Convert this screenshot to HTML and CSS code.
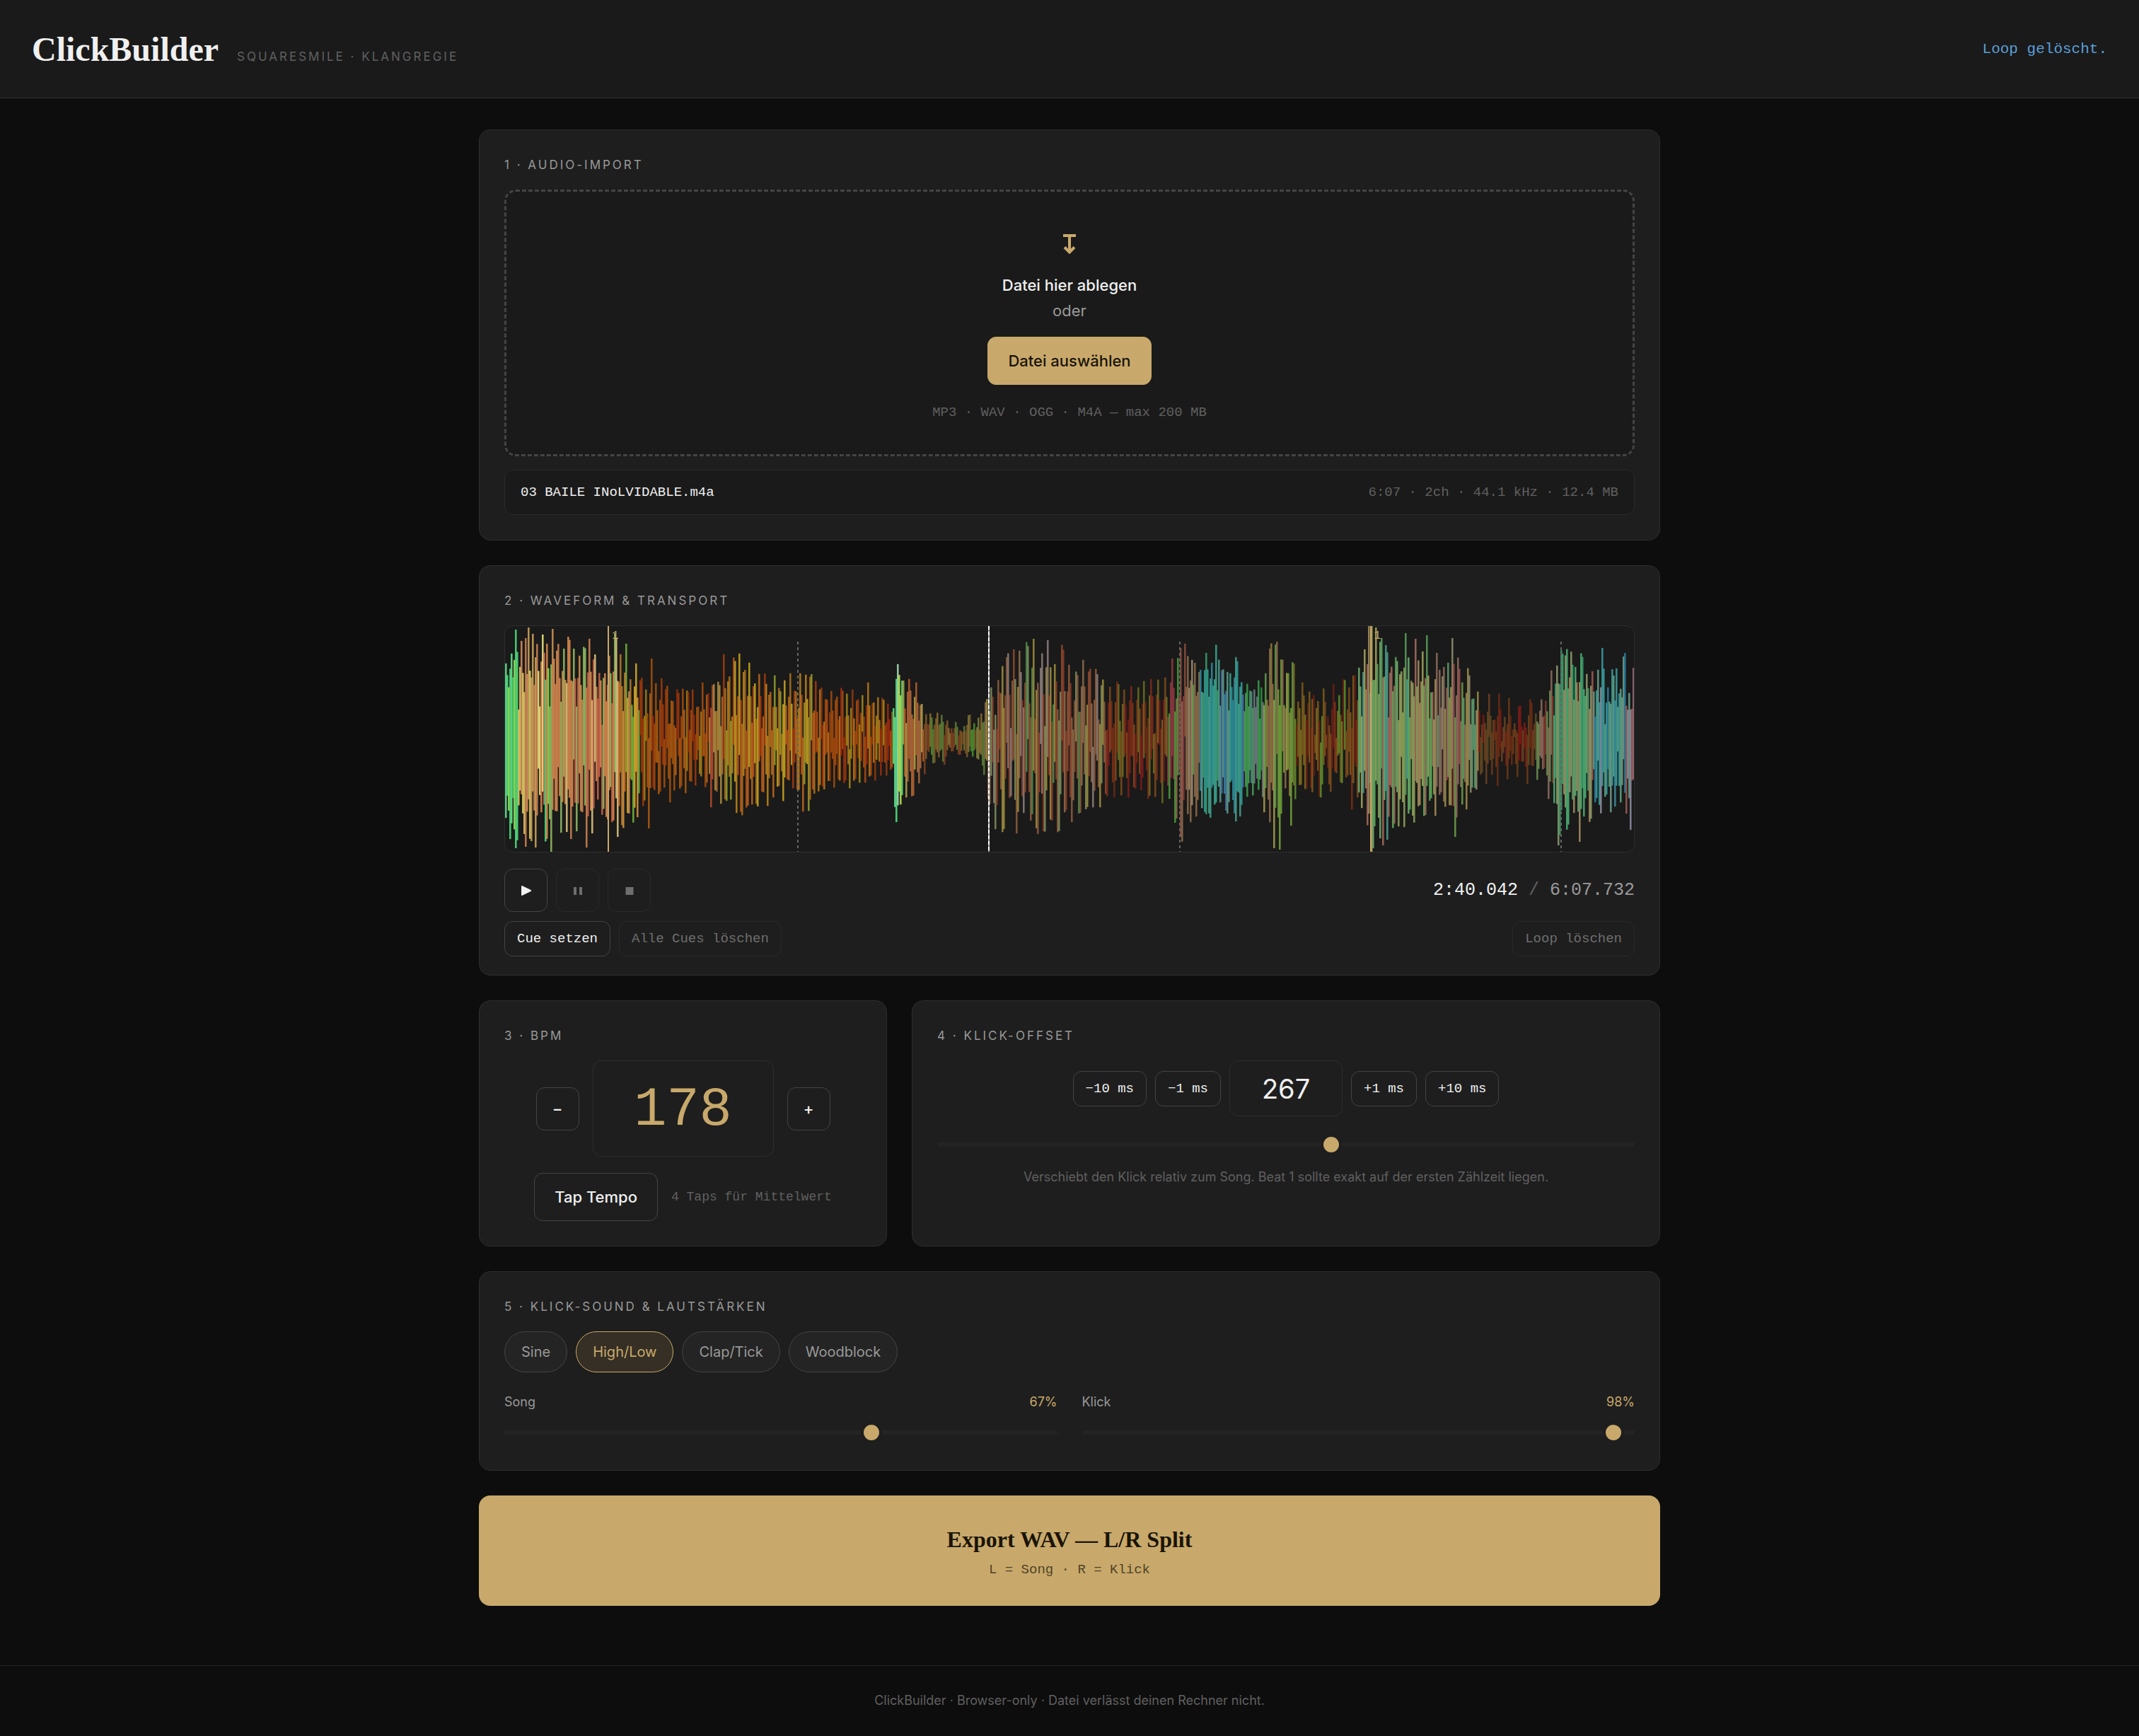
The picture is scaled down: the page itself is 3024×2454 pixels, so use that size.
FILE: index.html
```html
<!DOCTYPE html>
<html lang="de">
  <head>
    <meta charset="UTF-8" />
    <meta name="viewport" content="width=device-width, initial-scale=1.0" />
    <title>ClickBuilder</title>
    <link rel="stylesheet" href="styles.css">
  </head>
  <body>
    <header class="header">
      <div class="brand">
        <h1>ClickBuilder</h1>
        <span class="brand-sub">Squaresmile · Klangregie</span>
      </div>
      <div class="status" role="status">Loop gelöscht.</div>
    </header>

    <main class="main">
      <section class="card">
        <h2>1 · Audio-Import</h2>
        <div class="dropzone">
          <svg class="drop-icon" viewBox="0 0 18 28" aria-hidden="true">
            <path d="M0 2h18M9 2v23M2 18.5l7 7 7-7" />
          </svg>
          <p class="drop-title">Datei hier ablegen</p>
          <p class="drop-or">oder</p>
          <button class="btn btn-primary" type="button">Datei auswählen</button>
          <p class="drop-meta">MP3 · WAV · OGG · M4A — max 200 MB</p>
        </div>
        <div class="file-row">
          <span class="file-name">03 BAILE INoLVIDABLE.m4a</span>
          <span class="file-info">6:07 · 2ch · 44.1 kHz · 12.4 MB</span>
        </div>
      </section>

      <section class="card card-wave">
        <h2>2 · Waveform &amp; Transport</h2>
        <div class="wave">
          <canvas id="wave"></canvas>
          <div class="cue" style="left: 9.1%"><span>1</span></div>
          <div class="bar-line" style="left: 25.9%"></div>
          <div class="bar-line" style="left: 59.7%"></div>
          <div class="cue" style="left: 76.6%"><span>1</span></div>
          <div class="bar-line" style="left: 93.5%"></div>
          <div class="playhead" style="left: 42.8%"></div>
        </div>
        <div class="transport">
          <div class="buttons">
            <button class="btn btn-icon" type="button" aria-label="Play">
              <svg viewBox="0 0 16 16"><path d="M1 2.200Q1 .5 2.600 1.200L14.500 7Q16 8 14.500 9L2.600 14.800Q1 15.500 1 13.800Z" /></svg>
            </button>
            <button class="btn btn-icon" type="button" aria-label="Pause" disabled>
              <svg viewBox="0 0 16 16"><path d="M2 3h4v11H2zM10 3h4v11h-4z" /></svg>
            </button>
            <button class="btn btn-icon" type="button" aria-label="Stop" disabled>
              <svg viewBox="0 0 16 16"><path d="M2.500 3h11v11h-11z" /></svg>
            </button>
          </div>
          <div class="time">2:40.042 <span class="time-sep">/</span> <span class="time-total">6:07.732</span></div>
        </div>
        <div class="transport cues">
          <div class="buttons">
            <button class="btn btn-small" type="button">Cue setzen</button>
            <button class="btn btn-small" type="button" disabled>Alle Cues löschen</button>
          </div>
          <button class="btn btn-small" type="button" disabled>Loop löschen</button>
        </div>
      </section>

      <div class="columns">
        <section class="card">
          <h2>3 · BPM</h2>
          <div class="bpm-row">
            <button class="btn btn-icon" type="button" aria-label="BPM verringern">−</button>
            <input class="bpm-input" type="number" value="178" aria-label="BPM">
            <button class="btn btn-icon" type="button" aria-label="BPM erhöhen">+</button>
          </div>
          <div class="tap-row">
            <button class="btn" type="button">Tap Tempo</button>
            <span class="tap-hint">4 Taps für Mittelwert</span>
          </div>
        </section>

        <section class="card">
          <h2>4 · Klick-Offset</h2>
          <div class="offset-row">
            <button class="btn btn-small" type="button">−10 ms</button>
            <button class="btn btn-small" type="button">−1 ms</button>
            <input class="offset-input" type="number" value="267" aria-label="Offset in ms">
            <button class="btn btn-small" type="button">+1 ms</button>
            <button class="btn btn-small" type="button">+10 ms</button>
          </div>
          <input class="slider offset-slider" type="range" min="-2000" max="2000" value="267" aria-label="Klick-Offset">
          <p class="hint">Verschiebt den Klick relativ zum Song. Beat 1 sollte exakt auf der ersten Zählzeit liegen.</p>
        </section>
      </div>

      <section class="card">
        <h2>5 · Klick-Sound &amp; Lautstärken</h2>
        <div class="pills">
          <button class="pill" type="button" aria-pressed="false">Sine</button>
          <button class="pill active" type="button" aria-pressed="true">High/Low</button>
          <button class="pill" type="button" aria-pressed="false">Clap/Tick</button>
          <button class="pill" type="button" aria-pressed="false">Woodblock</button>
        </div>
        <div class="volumes">
          <div class="volume">
            <div class="volume-head">
              <label for="vol-song">Song</label>
              <output for="vol-song">67%</output>
            </div>
            <input class="slider" id="vol-song" type="range" min="0" max="100" value="67">
          </div>
          <div class="volume">
            <div class="volume-head">
              <label for="vol-click">Klick</label>
              <output for="vol-click">98%</output>
            </div>
            <input class="slider" id="vol-click" type="range" min="0" max="100" value="98">
          </div>
        </div>
      </section>

      <button class="export" type="button">
        <span class="export-title">Export WAV — L/R Split</span>
        <span class="export-sub">L = Song · R = Klick</span>
      </button>
    </main>

    <footer class="footer">ClickBuilder · Browser-only · Datei verlässt deinen Rechner nicht.</footer>

    <script src="waveform.js"></script>
  </body>
</html>
```
FILE: styles.css
```css
:root {
  --bg: #0d0d0d;
  --surface: #1a1a1a;
  --card: #1e1e1e;
  --raised: #242424;
  --line: #2e2e2e;
  --line-strong: #444;
  --text: #f0f0f0;
  --muted: #999;
  --dim: #606060;
  --gold: #c8a96b;
  --sans: Inter, "Open Sans", sans-serif;
  --mono: "Liberation Mono", monospace;
  --serif: "Liberation Serif", serif;
}
* {
  box-sizing: border-box;
}
body {
  margin: 0;
  background: var(--bg);
  color: var(--text);
  font: 22px/36px var(--sans);
}
h1,
h2,
p {
  margin: 0;
}
button,
input {
  font-family: inherit;
  margin: 0;
}

/* Header */
.header {
  display: flex;
  align-items: center;
  justify-content: space-between;
  padding: 40px 45px 38px;
  background: var(--surface);
  border-bottom: 1px solid var(--line);
}
.brand {
  display: flex;
  align-items: baseline;
  gap: 26px;
}
h1 {
  font: bold 48px/60px var(--serif);
}
.brand-sub {
  font-size: 17px;
  line-height: 28px;
  letter-spacing: 3px;
  text-transform: uppercase;
  color: var(--dim);
}
.status {
  font: 21px/28px var(--mono);
  color: #5b9fd8;
}

/* Layout */
.main {
  display: flex;
  flex-direction: column;
  gap: 35px;
  max-width: 1670px;
  margin: 0 auto;
  padding: 44px 0 84px;
}
.columns {
  display: grid;
  grid-template-columns: 6fr 11fr;
  gap: 35px;
}
.card {
  padding: 35px;
  background: var(--card);
  border: 1px solid var(--line);
  border-radius: 16px;
}
h2 {
  margin-bottom: 21px;
  font-size: 17px;
  font-weight: 400;
  line-height: 28px;
  letter-spacing: 3px;
  text-transform: uppercase;
  color: var(--muted);
}

/* Buttons */
.btn {
  height: 68px;
  padding: 0 28px;
  border: 1px solid var(--line-strong);
  border-radius: 12px;
  background: transparent;
  color: var(--text);
  font-size: 22px;
  font-weight: 500;
}
.btn-primary {
  border-color: var(--gold);
  background: var(--gold);
  color: #1a1408;
}
.btn-icon {
  display: flex;
  align-items: center;
  justify-content: center;
  width: 61px;
  height: 61px;
  padding: 0;
}
.btn-icon svg {
  width: 16px;
  height: 16px;
  fill: currentColor;
}
.btn-small {
  height: 50px;
  padding: 0 17px;
  font-family: var(--mono);
  font-size: 19px;
  font-weight: normal;
}
.btn:disabled {
  border-color: #2a2a2a;
  color: #6e6e6e;
}
.buttons {
  display: flex;
  gap: 12px;
}

/* Import */
.dropzone {
  display: flex;
  flex-direction: column;
  align-items: center;
  padding: 60px 35px 47px;
  border: 3px dashed var(--line-strong);
  border-radius: 16px;
  background: var(--surface);
}
.drop-icon {
  width: 18px;
  height: 28px;
  margin-bottom: 26px;
  fill: none;
  stroke: var(--gold);
  stroke-width: 4;
}
.drop-title {
  font-weight: 500;
}
.drop-or {
  margin-bottom: 19px;
  color: var(--muted);
}
.drop-meta {
  margin-top: 27px;
  font: 19px/24px var(--mono);
  color: var(--dim);
}
.file-row {
  display: flex;
  justify-content: space-between;
  margin-top: 19px;
  padding: 17px 22px;
  border: 1px solid #2a2a2a;
  border-radius: 12px;
  background: var(--surface);
  font: 19px/28px var(--mono);
}
.file-info {
  color: var(--dim);
}

/* Waveform */
.card-wave {
  padding-bottom: 26px;
}
.wave {
  position: relative;
  height: 321px;
  overflow: hidden;
  border: 1px solid var(--line);
  border-radius: 12px;
  background: var(--surface);
}
.wave canvas {
  display: block;
  width: 100%;
  height: 100%;
}
.cue,
.bar-line,
.playhead {
  position: absolute;
  top: 0;
  bottom: 0;
  width: 2px;
}
.cue {
  background: var(--gold);
}
.cue span {
  position: absolute;
  left: 6px;
  top: 6px;
  font: 16px/16px var(--mono);
  color: var(--gold);
}
.bar-line {
  top: 22px;
  background: repeating-linear-gradient(#666 0 4px, transparent 4px 8px);
}
.playhead {
  background: repeating-linear-gradient(#fff 0 5px, #aaa 5px 8px);
}
.transport {
  display: flex;
  align-items: center;
  justify-content: space-between;
  margin-top: 23px;
}
.cues {
  margin-top: 13px;
}
.time {
  font: 25px/36px var(--mono);
}
.time-sep {
  color: var(--dim);
}
.time-total {
  color: var(--muted);
}

/* BPM and offset */
.bpm-row,
.tap-row,
.offset-row {
  display: flex;
  align-items: center;
  justify-content: center;
  gap: 19px;
}
.tap-row {
  margin-top: 23px;
}
.tap-hint {
  font: 18px/28px var(--mono);
  color: var(--dim);
}
.bpm-input,
.offset-input {
  border: 1px solid var(--line);
  border-radius: 12px;
  background: transparent;
  text-align: center;
  appearance: textfield;
}
input::-webkit-inner-spin-button {
  appearance: none;
  margin: 0;
}
.bpm-input {
  width: 256px;
  height: 136px;
  padding: 5px 0 0;
  font: 77px var(--mono);
  color: var(--gold);
}
.offset-row {
  gap: 12px;
}
.offset-input {
  width: 160px;
  height: 79px;
  font-size: 38px;
  color: var(--text);
}
.hint {
  margin-top: 16px;
  font-size: 18px;
  line-height: 30px;
  text-align: center;
  color: var(--dim);
}

/* Sliders */
.slider {
  display: block;
  width: 100%;
  height: 30px;
  background: transparent;
  appearance: none;
}
.slider::-webkit-slider-runnable-track {
  height: 6px;
  border-radius: 3px;
  background: var(--raised);
}
.slider::-webkit-slider-thumb {
  width: 30px;
  height: 30px;
  margin-top: -12px;
  border: 4px solid var(--card);
  border-radius: 50%;
  background: var(--gold);
  appearance: none;
}
.offset-slider {
  margin-top: 25px;
}

/* Sound and volumes */
.pills {
  display: flex;
  gap: 12px;
}
.pill {
  height: 58px;
  padding: 0 23px;
  border: 1px solid var(--line-strong);
  border-radius: 29px;
  background: var(--raised);
  color: var(--muted);
  font-size: 20px;
}
.pill.active {
  border-color: var(--gold);
  background: #352f25;
  color: var(--gold);
}
.volumes {
  display: grid;
  grid-template-columns: 1fr 1fr;
  gap: 35px;
  margin-top: 28px;
  padding-bottom: 3px;
}
.volume-head {
  display: flex;
  justify-content: space-between;
  margin-bottom: 14px;
  font-size: 18px;
  line-height: 28px;
  color: var(--muted);
}
.volume-head output {
  color: var(--gold);
}

/* Export */
.export {
  display: flex;
  flex-direction: column;
  align-items: center;
  gap: 11px;
  padding: 42px 35px 39px;
  border: 0;
  border-radius: 16px;
  background: var(--gold);
  color: #1a1408;
}
.export-title {
  font: bold 32px/40px var(--serif);
}
.export-sub {
  font: 19px/24px var(--mono);
  opacity: 0.7;
}

.footer {
  padding: 35px;
  border-top: 1px solid #222;
  text-align: center;
  font-size: 18px;
  line-height: 28px;
  color: var(--dim);
}
```
FILE: waveform.js
```js
// peaks as x, height pairs; x runs from 0 to 1596, height from 0 to 160
const upper = [
  0,107, 8,121, 14,155, 22,139, 29,157, 32,158, 38,149, 43,141, 53,153, 58,135, 66,156, 73,142, 82,128, 89,159,
  96,128, 104,118, 111,145, 118,142, 125,128, 133,100, 139,102, 146,118, 155,158, 162,120, 170,135, 175,90,
  184,107, 191,101, 198,70, 206,114, 212,79, 220,86, 227,86, 235,62, 243,80, 250,71, 257,80, 264,70, 271,56,
  278,80, 285,72, 293,85, 301,89, 308,120, 315,98, 323,130, 330,121, 337,112, 344,108, 351,90, 358,92, 367,100,
  373,81, 380,90, 387,82, 394,83, 402,93, 409,80, 416,93, 424,91, 431,105, 438,82, 445,85, 453,66, 460,68,
  467,68, 475,83, 482,64, 490,70, 497,66, 504,62, 512,80, 519,60, 526,59, 533,67, 540,50, 547,46, 554,106,
  561,88, 570,85, 580,80, 587,55, 594,35, 600,36, 610,37, 616,34, 624,26, 630,15, 636,24, 643,14, 648,18,
  655,38, 662,22, 668,30, 672,36, 679,62, 687,84, 692,34, 697,113, 701,116, 709,132, 718,127, 726,125, 737,143,
  746,142, 751,98, 757,130, 766,140, 769,120, 776,106, 787,139, 796,105, 807,99, 816,112, 825,105, 835,105,
  843,87, 854,74, 865,84, 874,70, 884,75, 894,73, 902,82, 912,85, 922,84, 932,87, 942,114, 951,125, 954,129,
  960,135, 963,128, 970,112, 973,115, 981,103, 990,122, 998,108, 1005,146, 1007,128, 1013,108, 1020,95,
  1024,93, 1033,122, 1039,84, 1048,78, 1053,81, 1058,70, 1064,83, 1068,73, 1074,93, 1081,147, 1089,149,
  1097,122, 1105,104, 1113,121, 1121,60, 1126,80, 1136,67, 1141,81, 1147,57, 1157,76, 1162,32, 1170,78,
  1178,62, 1185,97, 1192,73, 1199,106, 1206,101, 1214,127, 1220,160, 1224,160, 1230,158, 1237,156, 1245,147,
  1251,112, 1259,128, 1265,105, 1272,150, 1275,132, 1281,98, 1286,142, 1289,126, 1296,124, 1302,147, 1309,75,
  1316,122, 1320,98, 1325,116, 1332,108, 1338,143, 1347,122, 1352,80, 1361,106, 1367,66, 1374,67, 1382,34,
  1390,64, 1397,32, 1404,64, 1412,31, 1418,58, 1426,22, 1433,54, 1440,23, 1449,61, 1456,36, 1464,56, 1470,54,
  1478,97, 1486,104, 1493,139, 1499,135, 1507,133, 1512,102, 1521,129, 1528,92, 1536,96, 1544,98, 1550,129,
  1558,73, 1565,111, 1570,100, 1575,83, 1581,136, 1588,65, 1595,114
];
const lower = [
  0,112, 6,142, 14,155, 28,153, 35,160, 42,154, 50,104, 57,160, 64,160, 71,115, 78,133, 86,132, 92,142, 100,131,
  107,116, 114,154, 122,134, 130,86, 137,118, 143,126, 151,129, 158,139, 165,136, 173,117, 181,131, 186,111,
  195,106, 202,127, 209,80, 217,90, 224,69, 232,90, 238,73, 247,78, 254,77, 261,70, 268,66, 275,60, 283,76,
  290,97, 297,86, 304,92, 311,103, 318,86, 326,105, 333,122, 341,110, 348,93, 355,109, 363,86, 370,95, 378,83,
  385,80, 392,88, 399,68, 406,70, 413,83, 420,103, 429,111, 435,88, 443,83, 449,83, 457,69, 464,69, 471,66,
  479,70, 486,70, 493,69, 500,62, 508,62, 515,63, 522,59, 530,52, 538,52, 545,50, 552,118, 558,93, 566,83,
  575,86, 584,63, 592,50, 597,20, 605,37, 612,26, 619,37, 631,18, 641,23, 652,26, 660,25, 667,31, 676,51,
  683,100, 692,128, 703,136, 713,89, 722,134, 732,105, 743,120, 751,142, 761,139, 771,121, 781,139, 791,110,
  800,118, 811,110, 821,105, 830,97, 840,97, 849,84, 860,83, 870,80, 880,83, 889,76, 898,73, 909,89, 918,82,
  928,91, 938,85, 947,128, 955,153, 965,110, 968,118, 976,110, 984,98, 989,119, 995,120, 1003,98, 1010,90,
  1019,106, 1032,117, 1038,110, 1048,82, 1056,80, 1064,72, 1072,104, 1080,118, 1086,155, 1094,157, 1102,70,
  1110,123, 1115,96, 1123,72, 1131,80, 1139,77, 1151,83, 1166,75, 1173,55, 1181,70, 1189,60, 1196,100,
  1205,91, 1210,98, 1219,131, 1224,160, 1226,155, 1236,141, 1240,151, 1246,143, 1255,133, 1262,124, 1270,125,
  1277,121, 1283,127, 1291,103, 1299,119, 1307,95, 1314,109, 1321,88, 1327,104, 1335,105, 1342,139, 1352,93,
  1358,100, 1365,85, 1371,80, 1379,56, 1386,64, 1394,51, 1402,67, 1408,32, 1416,57, 1422,37, 1430,54, 1437,38,
  1444,64, 1451,45, 1458,58, 1467,46, 1474,85, 1482,91, 1488,151, 1501,129, 1510,105, 1518,146, 1524,110,
  1533,123, 1541,98, 1547,113, 1555,90, 1562,104, 1568,96, 1576,90, 1584,106, 1590,129, 1595,70
];

// colours by frequency content, each up to the given x;
// dip is how far the level falls between two peaks
const bands = [
  [18, 0.5, "#45c968 #5fe08f #4fd87c #9ee04a"],
  [45, 0.8, "#e8e04f #d08a5c #c9a05a #c9804f #8ce05a #d8c860"],
  [62, 0.7, "#4fd87c #d08a4c #7de04a #e5e07a #d8705a"],
  [160, 0.8, "#d8844a #c9804f #c8904f #c8604a #d9bf7c #d08a4c #c8604a #8fb860"],
  [190, 0.9, "#d0903c #c9702a #b07828 #c98a5a #6fb03a #d0a828"],
  [288, 1.2, "#a04a0c #a85a10 #8f2a0c #a07a14 #a0500c #9a380c #b0601a"],
  [308, 1, "#b04a30 #a86a30 #a83c30 #a88a3c"],
  [440, 1.1, "#b8641c #b8801c #b0501c #c0a020 #a8701c #8f9a2a #a03a10"],
  [548, 1.2, "#a84a10 #9a2a10 #b07418 #8f3a0c #a04a0c #a08418"],
  [562, 0.4, "#4fe07c #a0d8b0 #5fd890 #b8e050"],
  [592, 0.9, "#a8683c #b85a28 #a8a048 #b0602c"],
  [678, 0.8, "#5a7a34 #7a7a3c #7a5a28 #7a4020 #4a8a30 #8a6a30"],
  [850, 1.1, "#8a5a3c #8a6a4a #7a8a5a #8a3c28 #9a8a3c #8a5a3c #4a8a4a #8a7a78 #8a4a30"],
  [935, 1.2, "#7a3018 #7a1c1c #7a4a1c #6a2a14 #7a2a1c #6a6a20"],
  [962, 1.1, "#8a3a40 #4a9a3a #8a4a3c #8a6a4a #5a9a70"],
  [982, 0.7, "#8a6a4a #5a9a4a #8a6a4a #9a8a70"],
  [1044, 0.6, "#4a9a8a #3aa08c #2a9a9a #3a9a6a #5a9a8a #4a6aa0 #2a8a9a"],
  [1072, 0.6, "#2a8f40 #4a9a5a #4a8a80 #3a9a4a #6a7a80"],
  [1114, 0.9, "#6a9a3a #8a7a3a #5a9a4a #a09a4a #8a6a4a #6f9f3a"],
  [1205, 1.1, "#7a4a1c #7a3018 #7a6a20 #6a2014 #5a8a2a #7a5a1c"],
  [1316, 0.8, "#5a9a5a #8aa05a #6aaa6a #a08a5a #4a9a8a #8a9a5a #a06a5a #a0a05a #5aaa5a"],
  [1376, 0.9, "#8a6a5a #5a9a6a #9a8a4a #9a4a4a #6a9a4a #8a8a6a"],
  [1458, 1.1, "#6a3a18 #6a2a14 #5a4a20 #7a1c14 #6a4020"],
  [1482, 0.9, "#7a4a40 #7a3a30 #6a8a50 #8a6a5a"],
  [1536, 0.7, "#3aa06a #4aaa70 #8a9a6a #3a9a6a #a08a60 #5aaa60"],
  [1600, 0.8, "#3a8a9a #6a9a8a #9a6a7a #2a7a9a #8a8aa0 #5aa080 #9a5a50 #3a9a9a"]
].map(([end, dip, list]) => ({ end, dip, colors: list.split(" ") }));

let seed = 7;
function rand() {
  seed = (seed * 16807) % 2147483647;
  return seed / 2147483647;
}

// falls off on both sides of a peak; below zero the column stays on one side of the axis
function levelAt(peaks, x, dip) {
  let i = 0;
  while (i < peaks.length - 4 && peaks[i + 2] <= x) i += 2;
  const t = Math.min(1, (x - peaks[i]) / (peaks[i + 2] - peaks[i]));
  const near = t < 0.5 ? t : 1 - t;
  const level = t < 0.5 ? peaks[i + 1] : peaks[i + 3];
  return level * (1 - dip * Math.max(0, near * 2 - 0.15));
}

function draw() {
  const canvas = document.getElementById("wave");
  const w = (canvas.width = canvas.clientWidth);
  const h = (canvas.height = canvas.clientHeight);
  const ctx = canvas.getContext("2d");
  const sx = w / 1596;
  const sy = h / 320;
  seed = 7;
  for (let x = 0; x < 1596; x += 2) {
    const { dip, colors } = bands.find(b => x < b.end);
    const up = levelAt(upper, x, dip * (0.8 + rand() * 0.4));
    const down = levelAt(lower, x, dip * (0.8 + rand() * 0.4));
    ctx.fillStyle = colors[Math.floor(rand() * colors.length)];
    ctx.globalAlpha = 0.5;
    ctx.fillRect(x * sx, (160 - up) * sy, 3 * sx, (up + down) * sy);
    ctx.globalAlpha = 0.8;
    ctx.fillRect(x * sx, (160 - up) * sy, 2 * sx, (up + down) * sy);
  }
}

draw();
window.addEventListener("resize", draw);
```
